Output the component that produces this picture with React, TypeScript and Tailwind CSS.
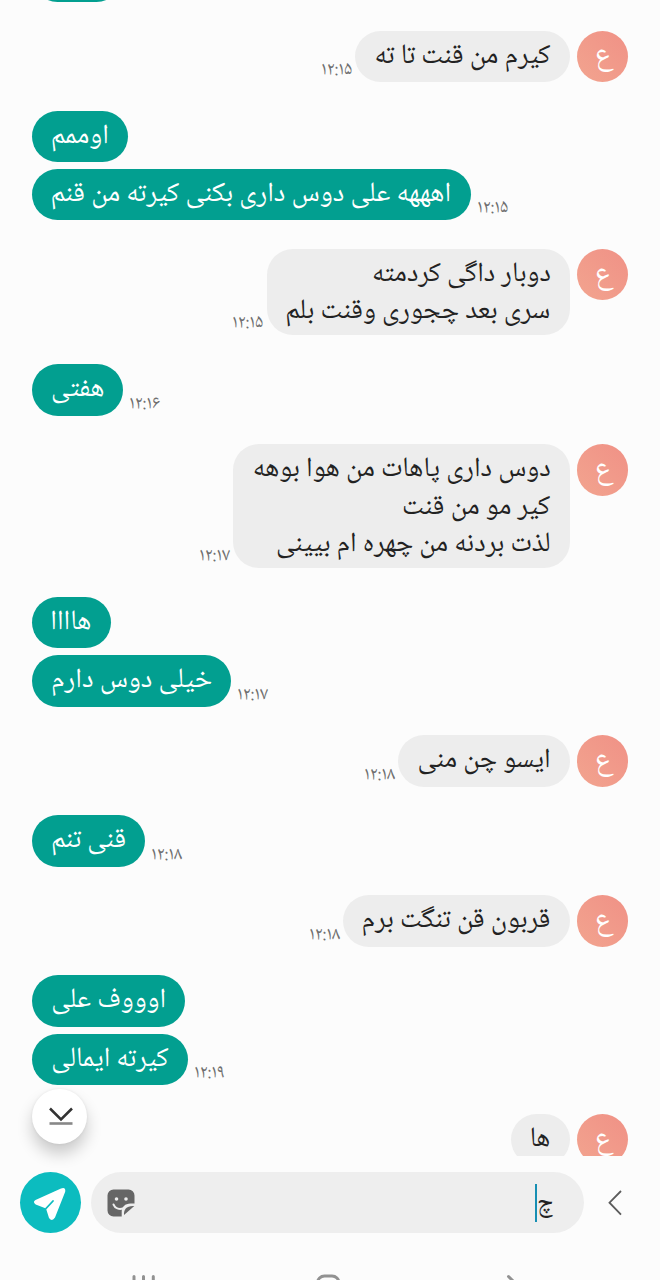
import { useLayoutEffect, useRef, useState } from "react";

const fontStack = "font-['Noto_Naskh_Arabic_UI','Noto_Naskh_Arabic','Noto_Sans_Arabic','DejaVu_Sans',sans-serif]";

type Line = { text: string; width: number };

type Message = {
  lines: Line[];
  time?: string;
  height: string;
};

type Group = { side: "in" | "out"; messages: Message[] };

const one = "h-[51.5px]";

const groups: Group[] = [
  { side: "in", messages: [{ lines: [{ text: "کیرم من قنت تا ته", width: 176.5 }], time: "۱۲:۱۵", height: one }] },
  {
    side: "out",
    messages: [
      { lines: [{ text: "اوممم", width: 58.3 }], height: one },
      { lines: [{ text: "اهههه علی دوس داری بکنی کیرته من قنم", width: 400.5 }], time: "۱۲:۱۵", height: one },
    ],
  },
  {
    side: "in",
    messages: [
      {
        lines: [
          { text: "دوبار داگی کردمته", width: 179 },
          { text: "سری بعد چجوری وقنت بلم", width: 264.7 },
        ],
        time: "۱۲:۱۵",
        height: "h-[86.5px]",
      },
    ],
  },
  { side: "out", messages: [{ lines: [{ text: "هفتی", width: 53 }], time: "۱۲:۱۶", height: one }] },
  {
    side: "in",
    messages: [
      {
        lines: [
          { text: "دوس داری پاهات من هوا بوهه", width: 298.3 },
          { text: "کیر مو من قنت", width: 148 },
          { text: "لذت بردنه من چهره ام بیینی", width: 275 },
        ],
        time: "۱۲:۱۷",
        height: "h-[124px]",
      },
    ],
  },
  {
    side: "out",
    messages: [
      { lines: [{ text: "هاااا", width: 40.7 }], height: one },
      { lines: [{ text: "خیلی دوس دارم", width: 161 }], time: "۱۲:۱۷", height: one },
    ],
  },
  { side: "in", messages: [{ lines: [{ text: "ایسو چن منی", width: 133.5 }], time: "۱۲:۱۸", height: one }] },
  { side: "out", messages: [{ lines: [{ text: "قنی تنم", width: 75 }], time: "۱۲:۱۸", height: one }] },
  { side: "in", messages: [{ lines: [{ text: "قربون قن تنگت برم", width: 188.5 }], time: "۱۲:۱۸", height: one }] },
  {
    side: "out",
    messages: [
      { lines: [{ text: "اوووف علی", width: 114.7 }], height: one },
      { lines: [{ text: "کیرته ایمالی", width: 117.7 }], time: "۱۲:۱۹", height: one },
    ],
  },
  { side: "in", messages: [{ lines: [{ text: "ها", width: 20.3 }], height: one }] },
];

/** Right-to-left run of text condensed to the given advance width. */
function Fit({ text, width, className = "" }: Line & { className?: string }) {
  const ref = useRef<HTMLSpanElement>(null);
  const [scale, setScale] = useState(1);
  useLayoutEffect(() => {
    if (ref.current) setScale(width / ref.current.offsetWidth);
  }, [width]);
  return (
    <span dir="rtl" lang="fa" className={`block whitespace-nowrap ${className}`} style={{ width }}>
      <span ref={ref} className="inline-block origin-right" style={{ transform: `scaleX(${scale})` }}>
        {text}
      </span>
    </span>
  );
}

function Avatar() {
  return (
    <div className="ml-[7px] flex size-[51.5px] shrink-0 items-center justify-center rounded-full bg-linear-to-tr from-[#f2a48f] to-[#f09186] text-[30px] leading-none text-white">
      <span className="pl-[3px]">ع</span>
    </div>
  );
}

function Bubble({ message, side }: { message: Message; side: "in" | "out" }) {
  const incoming = side === "in";
  return (
    <div className={`flex items-end ${incoming ? "flex-row-reverse" : ""}`}>
      <div
        className={`flex shrink-0 flex-col items-end rounded-[26px] px-[19px] pt-[7px] text-[28px] leading-[37.5px] ${message.height} ${
          incoming ? "bg-[#ededed] text-[#222]" : "bg-[#029f90] text-white"
        }`}
      >
        {message.lines.map((line) => (
          <Fit key={line.text} {...line} />
        ))}
      </div>
      {message.time && (
        <Fit
          text={message.time}
          width={31}
          className={`mb-[3px] text-[19px] leading-[18px] text-[#6f6f6f] ${incoming ? "mr-[3px]" : "ml-[6.5px]"}`}
        />
      )}
    </div>
  );
}

function Thread() {
  return (
    <main className="relative h-[1156px] shrink-0 overflow-hidden pr-8 pl-8">
      <div className="-mt-[49.5px] mb-[28.5px] h-[51.5px] w-[90px] rounded-[26px] bg-[#029f90]" />
      <div className="flex flex-col gap-[28.6px]">
        {groups.map((group, i) => (
          <section key={i} className={`flex ${group.side === "in" ? "justify-end" : ""}`}>
            <div className="flex flex-col gap-[6.8px]">
              {group.messages.map((message, j) => (
                <Bubble key={j} message={message} side={group.side} />
              ))}
            </div>
            {group.side === "in" && <Avatar />}
          </section>
        ))}
      </div>
    </main>
  );
}

function Composer() {
  return (
    <footer className="mt-4 flex h-[61px] shrink-0 items-center pl-5">
      <button className="size-[61px] shrink-0 rounded-full bg-[#0cbcbf]" aria-label="ارسال">
        <svg viewBox="0 0 61 61" className="size-[61px]">
          <path
            d="M15.5 28 41 16.4Q46 14.8 45.2 19.700L35 45.600Q32 50.200 29 45.900L26 36.500 15.700 32.400Q12.300 30 15.500 28Z"
            fill="#fff"
          />
          <path d="m26 36.500 7-7.500" stroke="#0cbcbf" strokeWidth="1.800" strokeLinecap="round" />
        </svg>
      </button>
      <div className="ml-[10px] flex h-[61px] w-[493px] items-center justify-between rounded-full bg-[#eee] pr-[31px] pl-[16px]">
        <svg viewBox="0 0 28 28" className="size-7">
          <path
            d="M6.5 .5h15A6 6 0 0 1 27.5 6.5v8h-4C18 14.5 14.7 18 14.7 23v4.500H6.500A6 6 0 0 1 .5 21.500v-15A6 6 0 0 1 6.500 .5Z"
            fill="#666"
          />
          <circle cx="9.500" cy="10" r="1.800" fill="#eee" />
          <circle cx="19" cy="10" r="1.800" fill="#eee" />
          <path d="M6.500 15.500c1.600 3.800 5.500 5.200 9.700 4" fill="none" stroke="#eee" strokeWidth="2" strokeLinecap="round" />
          <path d="M17 26C16.500 20.500 19.500 16.500 27.300 17Z" fill="#666" />
        </svg>
        <div className="flex items-center">
          <span className="h-[38px] w-[2.500px] bg-[#178fb3]" />
          <span className="pt-[2px] text-[27px] leading-[38px] text-[#222]">
            <Fit text="چ" width={16} />
          </span>
        </div>
      </div>
      <svg viewBox="0 0 14 26" className="ml-[24px] h-[26px] w-[14px]" fill="none" stroke="#5c5c5c" strokeWidth="1.800">
        <path d="M13 1 1.500 12.700 13 24.700" />
      </svg>
    </footer>
  );
}

function SystemNav() {
  return (
    <nav className="h-[47px] overflow-hidden">
      <svg viewBox="0 0 660 47" className="h-[47px] w-[660px]" fill="none" stroke="#929292" strokeWidth="3" strokeLinecap="round">
        <path d="M134 43.500v12M143.500 43.500v12M153.300 43.500v12" />
        <rect x="317.500" y="43" width="21.500" height="20" rx="7" />
        <path d="m508.500 43.500 9 9" />
      </svg>
    </nav>
  );
}

export default function App() {
  return (
    <div className={`relative flex h-[1280px] w-[660px] flex-col overflow-hidden bg-[#fcfcfc] ${fontStack}`}>
      <Thread />
      <Composer />
      <SystemNav />
      <button
        aria-label="پایین"
        className="absolute top-[1088.5px] left-8 flex size-[55px] items-center justify-center rounded-full bg-white shadow-[0_10px_16px_rgba(0,0,0,0.2),0_0_3px_rgba(0,0,0,0.08)]"
      >
        <svg viewBox="0 0 24 18" className="ml-[2px] h-[18px] w-6" fill="none">
          <path d="M1 1.500 12 12.500 23 1.500" stroke="#333" strokeWidth="2.500" />
          <path d="M.5 16.500h23" stroke="#888" strokeWidth="2.600" />
        </svg>
      </button>
    </div>
  );
}
